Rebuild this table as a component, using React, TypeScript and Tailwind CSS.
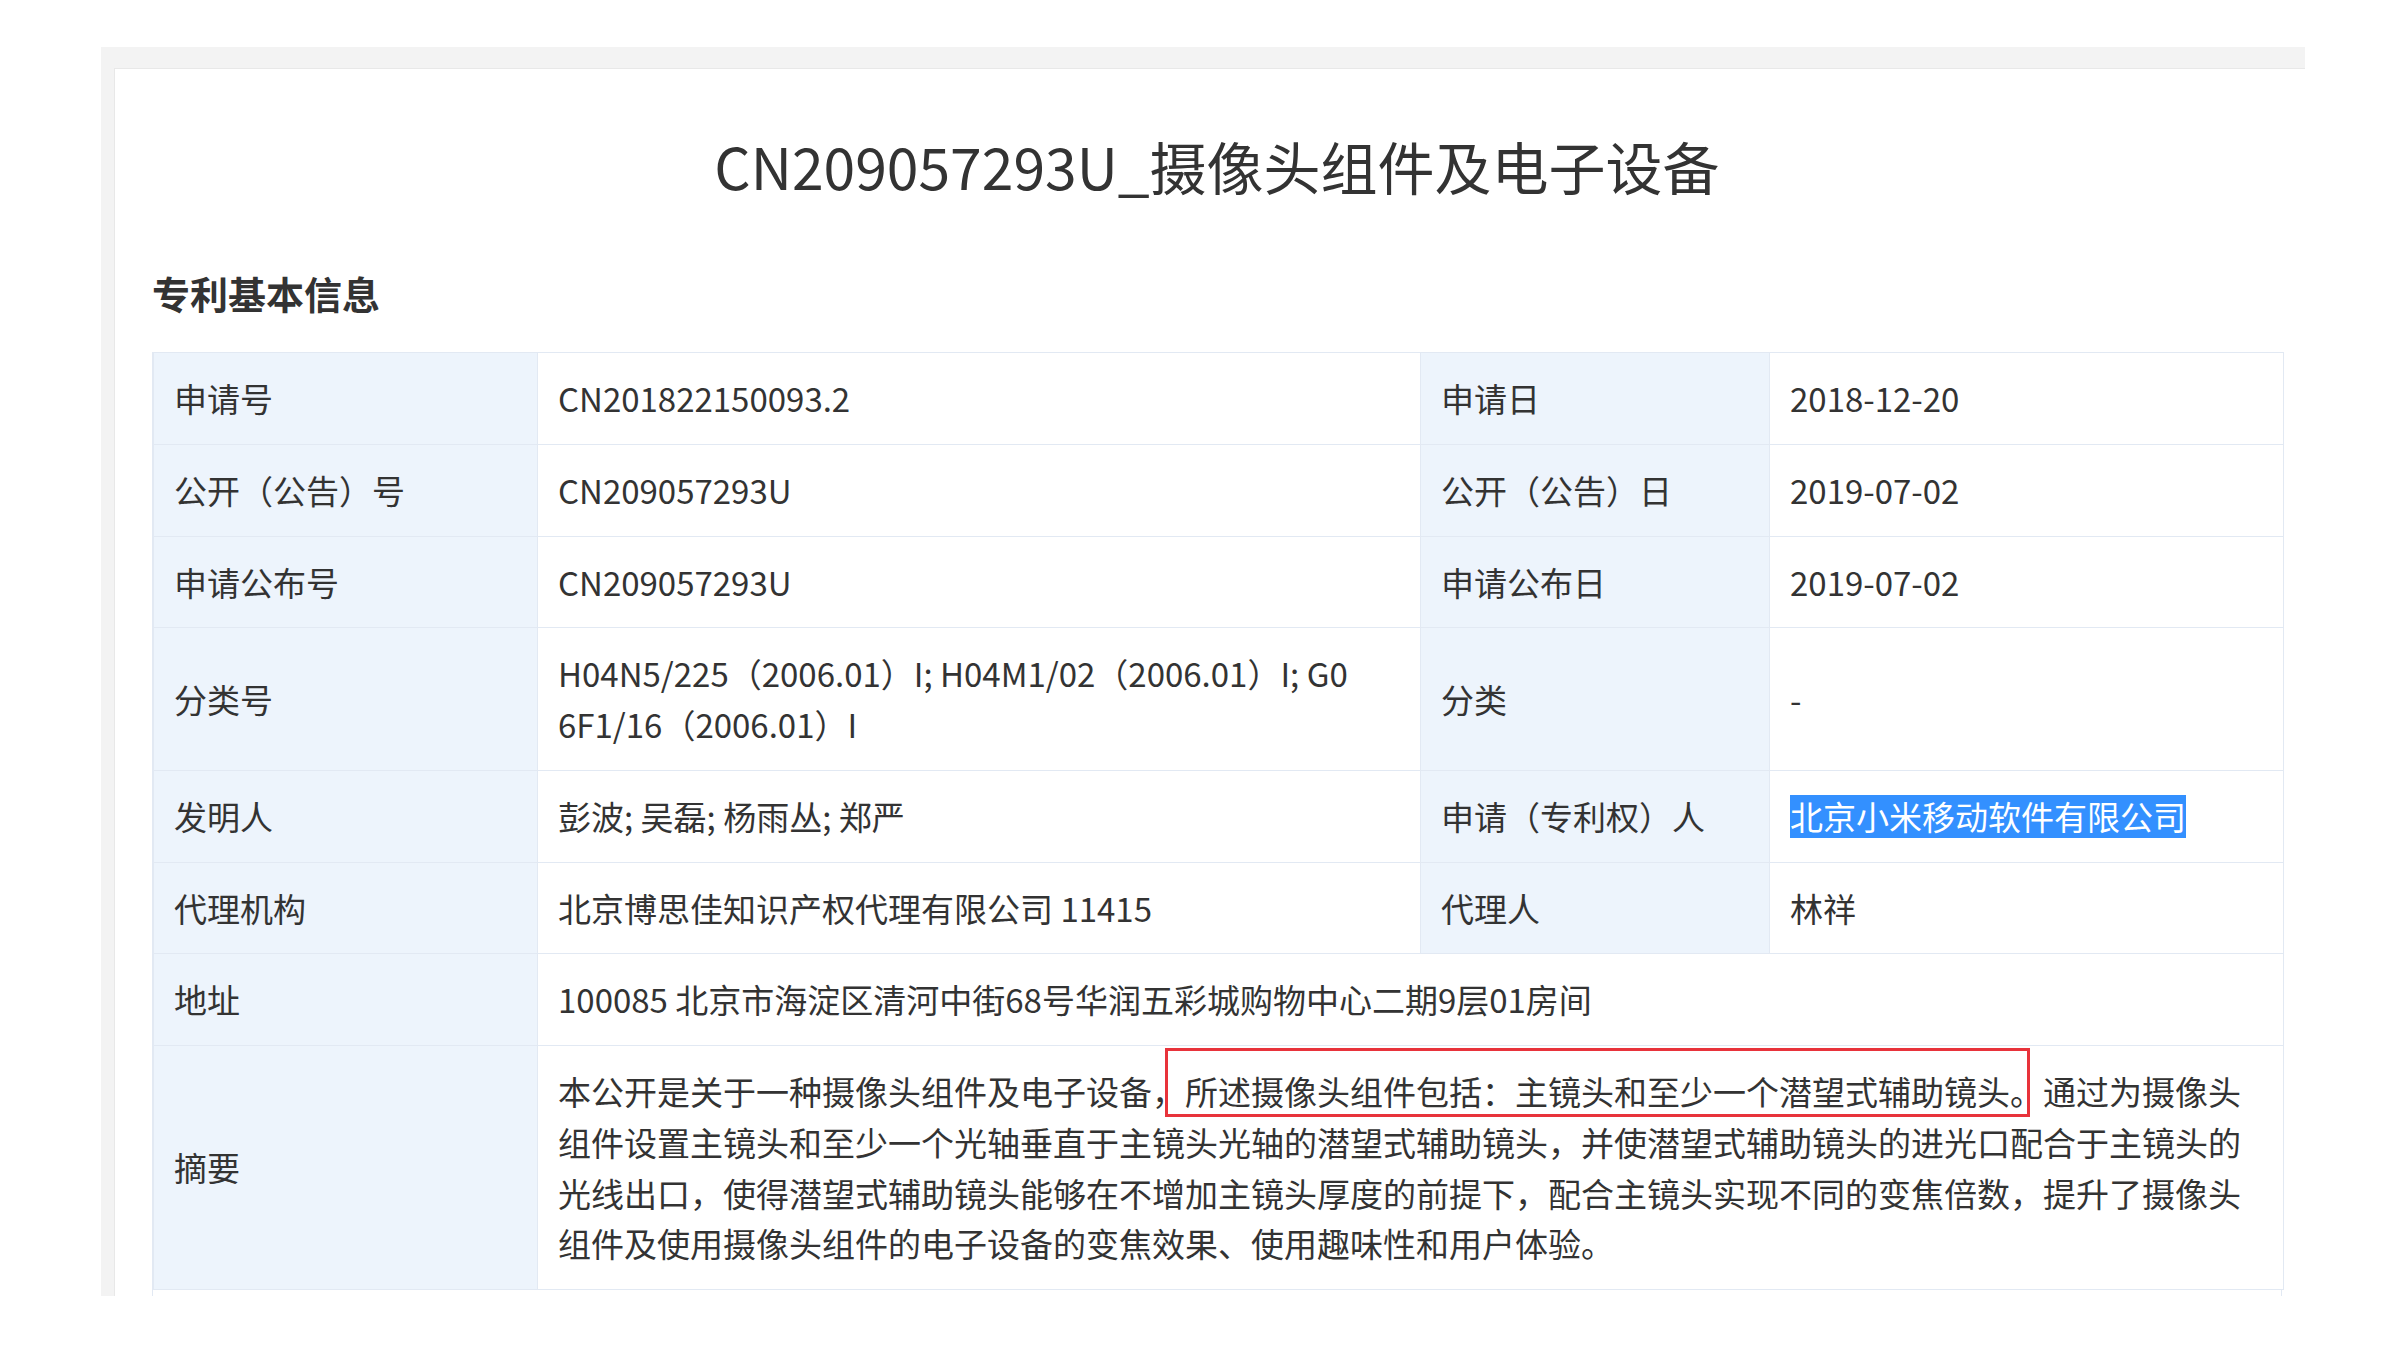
import React from "react";

const lab =
  "bg-[#edf4fc] border border-[#e2e9f3] px-[20px] py-[20px] leading-[50.75px] align-middle font-normal text-left text-[#333]";
const val =
  "bg-white border border-[#e2e9f3] px-[20px] py-[20px] leading-[50.75px] align-middle text-left text-[#333]";

export default function App() {
  return (
    <div className="w-[2400px] h-[1345px] bg-white overflow-hidden font-['Noto_Sans_CJK_SC',sans-serif] text-[#333]">
      <div className="ml-[101px] mt-[47px] w-[2204px] h-[1249px] bg-[#f3f3f3] pl-[13px] pt-[21px] overflow-hidden">
        <div className="bg-white h-[1300px] border-t border-l border-[#e8e8e8] pl-[37px] pr-[23px] pt-[56px]">
          <h1 className="text-center text-[57px] leading-[80px] font-normal text-[#333]">
            CN209057293U_摄像头组件及电子设备
          </h1>
          <h2 className="mt-[63px] text-[38px] leading-[50px] font-bold text-[#333]">专利基本信息</h2>
          <div className="mt-[34px] border-x border-[#e2e9f3] pb-[40px]">
            <table className="w-full table-fixed border-collapse text-[33px]">
              <colgroup>
                <col className="w-[384px]" />
                <col className="w-[883px]" />
                <col className="w-[349px]" />
                <col className="w-[514px]" />
              </colgroup>
              <tbody>
                <tr>
                  <th className={lab}>申请号</th>
                  <td className={val}>CN201822150093.2</td>
                  <th className={lab}>申请日</th>
                  <td className={val}>2018-12-20</td>
                </tr>
                <tr>
                  <th className={lab}>公开（公告）号</th>
                  <td className={val}>CN209057293U</td>
                  <th className={lab}>公开（公告）日</th>
                  <td className={val}>2019-07-02</td>
                </tr>
                <tr>
                  <th className={lab}>申请公布号</th>
                  <td className={val}>CN209057293U</td>
                  <th className={lab}>申请公布日</th>
                  <td className={val}>2019-07-02</td>
                </tr>
                <tr>
                  <th className={lab}>分类号</th>
                  <td className={val}>
                    H04N5/225（2006.01）I; H04M1/02（2006.01）I; G0
                    <br />
                    6F1/16（2006.01）I
                  </td>
                  <th className={lab}>分类</th>
                  <td className={val}>-</td>
                </tr>
                <tr>
                  <th className={lab}>发明人</th>
                  <td className={val}>彭波; 吴磊; 杨雨丛; 郑严</td>
                  <th className={lab}>申请（专利权）人</th>
                  <td className={val}>
                    <span className="inline-block bg-[#3390ff] text-white leading-[43px]">北京小米移动软件有限公司</span>
                  </td>
                </tr>
                <tr>
                  <th className={lab}>代理机构</th>
                  <td className={val}>北京博思佳知识产权代理有限公司 11415</td>
                  <th className={lab}>代理人</th>
                  <td className={val}>林祥</td>
                </tr>
                <tr>
                  <th className={lab}>地址</th>
                  <td className={val} colSpan={3}>
                    100085 北京市海淀区清河中街68号华润五彩城购物中心二期9层01房间
                  </td>
                </tr>
                <tr>
                  <th className={lab}>摘要</th>
                  <td className={val} colSpan={3}>
                    <span>本公开是关于一种摄像头组件及电子设备，</span>
                    <span className="relative">
                      所述摄像头组件包括：主镜头和至少一个潜望式辅助镜头。
                      <span className="pointer-events-none absolute left-[-20px] right-[13px] top-[-19px] bottom-[-2px] border-[3px] border-[#e8333b]" />
                    </span>
                    <span>
                      通过为摄像头组件设置主镜头和至少一个光轴垂直于主镜头光轴的潜望式辅助镜头，并使潜望式辅助镜头的进光口配合于主镜头的光线出口，使得潜望式辅助镜头能够在不增加主镜头厚度的前提下，配合主镜头实现不同的变焦倍数，提升了摄像头组件及使用摄像头组件的电子设备的变焦效果、使用趣味性和用户体验。
                    </span>
                  </td>
                </tr>
              </tbody>
            </table>
          </div>
        </div>
      </div>
    </div>
  );
}
